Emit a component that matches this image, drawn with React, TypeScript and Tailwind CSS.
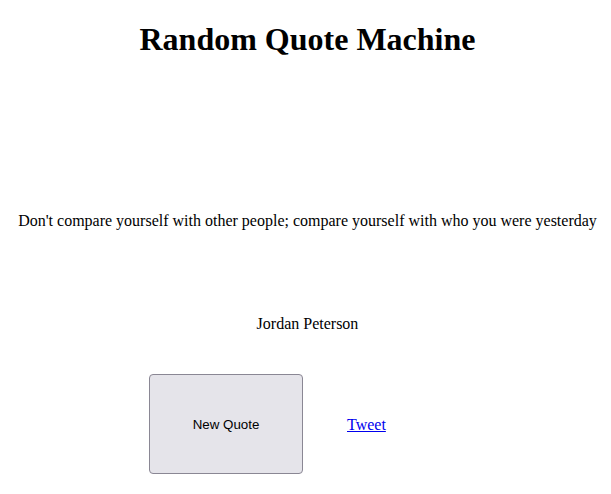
import React, { useState } from 'react';

const quotes = [
  {
    text: "Don't compare yourself with other people; compare yourself with who you were yesterday",
    author: 'Jordan Peterson'
  }
];

function App() {
  const [index, setIndex] = useState(0);
  const quote = quotes[index];

  return (
    <div className="w-[611px] h-[494px] pl-[4px] bg-white text-black font-['Liberation_Serif',serif] flex flex-col items-center">
      <h1 className="mt-[21px] text-[32px] leading-[37px] font-bold">Random Quote Machine</h1>

      <p id="text" className="mt-[151px] text-[16px] leading-[24px] text-center whitespace-nowrap">
        {quote.text}
      </p>

      <p id="author" className="mt-[79px] text-[16px] leading-[24px]">{quote.author}</p>

      {/* Buttons */}
      <div className="mt-[38px] w-full flex items-center pl-[145px] gap-[44px]">
        <button
          id="new-quote"
          onClick={() => setIndex((index + 1) % quotes.length)}
          className="w-[154px] h-[100px] pt-[1px] bg-[#e5e4ea] border border-[#8a8794] rounded-[4px] text-[13.33px] font-['Liberation_Sans',sans-serif] text-black"
        >
          New Quote
        </button>
        <a
          id="tweet-quote"
          href="#"
          className="pt-[1px] text-[16px] text-[#0000ee] underline"
        >
          Tweet
        </a>
      </div>
    </div>
  );
}

export default App;
